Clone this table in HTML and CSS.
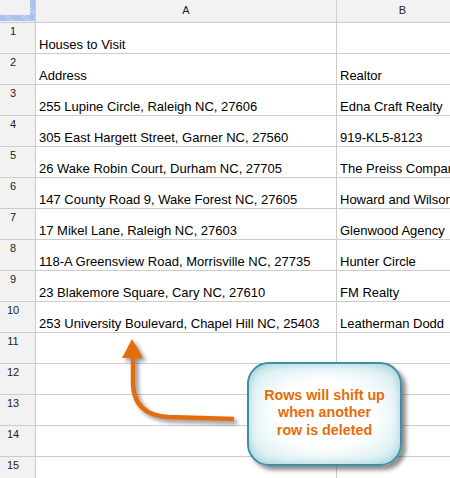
FILE: index.html
```html
<!DOCTYPE html>
<html>
<head>
<meta charset="utf-8">
<link rel="stylesheet" href="styles.css">
</head>
<body>
<div class="sheet">
  <div class="grid">
    <div class="corner"><span class="freeze-v"></span><span class="freeze-h"></span></div>
    <div class="colhead">A</div>
    <div class="colhead">B</div>

    <div class="rowhead">1</div><div class="cell">Houses to Visit</div><div class="cell"></div>
    <div class="rowhead">2</div><div class="cell">Address</div><div class="cell">Realtor</div>
    <div class="rowhead">3</div><div class="cell">255 Lupine Circle, Raleigh NC, 27606</div><div class="cell">Edna Craft Realty</div>
    <div class="rowhead">4</div><div class="cell">305 East Hargett Street, Garner NC, 27560</div><div class="cell">919-KL5-8123</div>
    <div class="rowhead">5</div><div class="cell">26 Wake Robin Court, Durham NC, 27705</div><div class="cell">The Preiss Company</div>
    <div class="rowhead">6</div><div class="cell">147 County Road 9, Wake Forest NC, 27605</div><div class="cell">Howard and Wilson</div>
    <div class="rowhead">7</div><div class="cell">17 Mikel Lane, Raleigh NC, 27603</div><div class="cell">Glenwood Agency</div>
    <div class="rowhead">8</div><div class="cell">118-A Greensview Road, Morrisville NC, 27735</div><div class="cell">Hunter Circle</div>
    <div class="rowhead">9</div><div class="cell">23 Blakemore Square, Cary NC, 27610</div><div class="cell">FM Realty</div>
    <div class="rowhead">10</div><div class="cell">253 University Boulevard, Chapel Hill NC, 25403</div><div class="cell">Leatherman Dodd</div>
    <div class="rowhead">11</div><div class="cell"></div><div class="cell"></div>
    <div class="rowhead">12</div><div class="cell"></div><div class="cell"></div>
    <div class="rowhead">13</div><div class="cell"></div><div class="cell"></div>
    <div class="rowhead">14</div><div class="cell"></div><div class="cell"></div>
    <div class="rowhead">15</div><div class="cell"></div><div class="cell"></div>
  </div>

  <svg class="arrow" width="450" height="478" viewBox="0 0 450 478">
    <path d="M234 419 L168 417 Q134 415 133 384 L133 356" fill="none" stroke="#e46c0a" stroke-width="4.5" stroke-linecap="butt"/>
    <polygon points="132,339 122,358 143,358" fill="#e46c0a"/>
  </svg>

  <div class="callout">Rows will shift up<br>when another<br>row is deleted</div>
</div>
</body>
</html>
```

FILE: styles.css
```css
* { box-sizing: border-box; }
html, body { margin: 0; padding: 0; }
body {
  width: 450px;
  height: 478px;
  overflow: hidden;
  background: #fff;
  font-family: "Liberation Sans", Arial, sans-serif;
}
.sheet {
  position: relative;
  width: 450px;
  height: 478px;
  overflow: hidden;
}
.grid {
  display: grid;
  grid-template-columns: 36px 301px 132px;
  grid-template-rows: 23px;
  grid-auto-rows: 31px;
  width: 469px;
}
.grid > div {
  border-right: 1px solid #cccccc;
  border-bottom: 1px solid #cccccc;
}
.corner {
  position: relative;
  background: #f2f2f2;
}
.freeze-v, .freeze-h {
  position: absolute;
  background: repeating-linear-gradient(45deg, #9fb9ef 0 1px, #c2d3f6 1px 2px);
}
.freeze-v { left: 30px; top: 0; width: 5px; height: 21px; }
.freeze-h { left: 0; top: 15px; width: 35px; height: 6px; }
.colhead {
  background: #f2f2f2;
  text-align: center;
  font-size: 11px;
  line-height: 13px;
  padding-top: 4px;
  color: #222;
}
.rowhead {
  background: #f2f2f2;
  font-size: 11px;
  line-height: 13px;
  padding: 2px 9px 0 0;
  text-align: center;
  color: #222;
}
.cell {
  display: flex;
  align-items: flex-end;
  padding: 0 3px 1px 3px;
  font-size: 13px;
  line-height: 15px;
  color: #000;
  white-space: nowrap;
  overflow: hidden;
}
.arrow {
  position: absolute;
  left: 0;
  top: 0;
  filter: drop-shadow(3px 3px 2px rgba(0,0,0,0.45));
}
.callout {
  position: absolute;
  left: 247px;
  top: 362px;
  width: 155px;
  height: 104px;
  border: 2px solid #3f8ea2;
  border-radius: 22px;
  background: radial-gradient(ellipse at center, #ffffff 45%, #e4f3f6 75%, #b9dfe6 100%);
  box-shadow: inset 0 0 10px rgba(120,190,205,0.6), 4px 4px 4px rgba(0,0,0,0.45);
  display: flex;
  align-items: center;
  justify-content: center;
  text-align: center;
  font-weight: bold;
  font-size: 14.3px;
  line-height: 17.5px;
  color: #e46c0a;
  padding-bottom: 2px;
}
```
